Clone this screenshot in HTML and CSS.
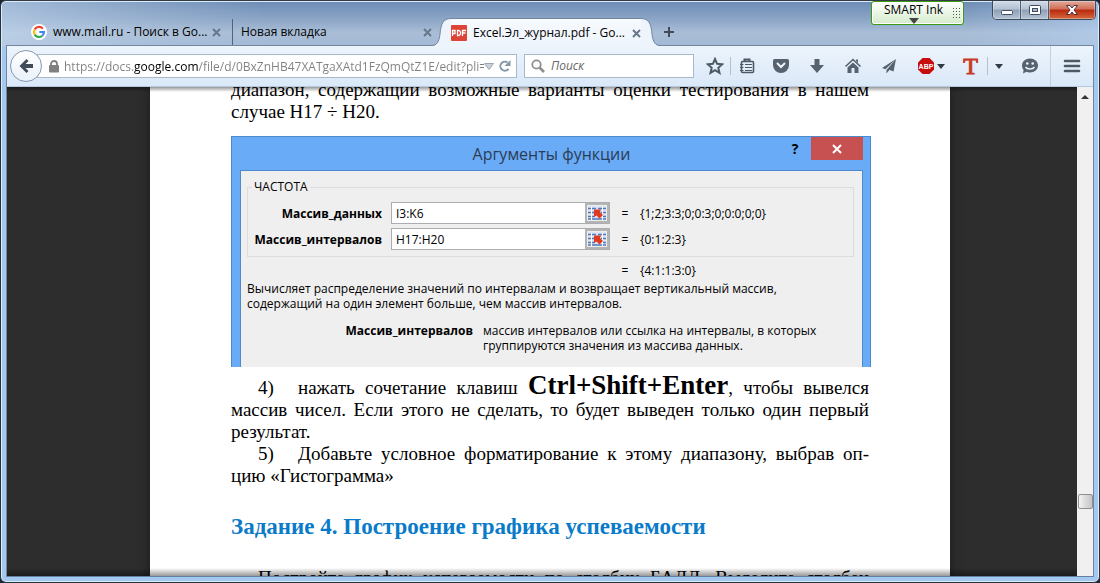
FILE: index.html
```html
<!DOCTYPE html>
<html lang="ru">
<head>
<meta charset="utf-8">
<title>Excel.Эл_журнал.pdf</title>
<link rel="stylesheet" href="styles.css">
</head>
<body>
<div class="window">
  <header class="tabs">
    <div class="tab">
      <svg class="favicon" viewBox="0 0 16 16"><circle cx="8" cy="8" r="8" fill="#fff"/><g fill="none" stroke-width="2.2"><path d="M11.9 4.6A5 5 0 0 0 3.7 5.5" stroke="#ea4335"/><path d="M3.7 5.5A5 5 0 0 0 3.7 10.6" stroke="#fbbc05"/><path d="M3.7 10.6A5 5 0 0 0 11.3 11.7" stroke="#34a853"/><path d="M11.3 11.7A5 5 0 0 0 13 8H8.3" stroke="#4285f4"/></g></svg>
      <span class="title">www.mail.ru - Поиск в Go...</span>
      <button class="close" aria-label="Закрыть вкладку"><svg viewBox="0 0 9 9"><path d="M1 1l7 7M8 1L1 8"/></svg></button>
    </div>
    <div class="tab second">
      <span class="title">Новая вкладка</span>
      <button class="close" aria-label="Закрыть вкладку"><svg viewBox="0 0 9 9"><path d="M1 1l7 7M8 1L1 8"/></svg></button>
    </div>
    <div class="active-tab">
      <svg class="edge" viewBox="0 0 20 29"><path class="fill" d="M0 29V28C6 28 8 24 9 16C10 6 12 .5 20 .5V29Z"/><path class="line" d="M0 27.5C6 27.5 8 24 9 16C10 6 12 .5 20 .5"/></svg>
      <div class="tab-body">
        <svg class="favicon" viewBox="0 0 16 16"><rect width="16" height="16" rx="1" fill="#db4437"/><path d="M1.500 11V5.500H4V8.500H2M6.500 5.500V10.500H8L9.500 9V7L8 5.500ZM11.500 11V5.500H15M11.500 8H14.500" fill="none" stroke="#fff" stroke-width="1.300"/></svg>
        <span class="title">Excel.Эл_журнал.pdf - Go...</span>
        <button class="close" aria-label="Закрыть вкладку"><svg viewBox="0 0 9 9"><path d="M1 1l7 7M8 1L1 8"/></svg></button>
      </div>
      <svg class="edge" viewBox="0 0 20 29"><path class="fill" d="M20 29V28C14 28 12 24 11 16C10 6 8 .5 0 .5V29Z"/><path class="line" d="M20 27.5C14 27.5 12 24 11 16C10 6 8 .5 0 .5"/></svg>
    </div>
    <button class="new-tab" aria-label="Новая вкладка"><svg viewBox="0 0 10 10"><path d="M5 0V10M0 5H10" stroke="#414b57" stroke-width="2"/></svg></button>
  </header>

  <button class="smart-ink"><span>SMART Ink</span><svg class="ink-arrow" viewBox="0 0 10 6"><path d="M0 0H10L5 6Z" fill="#444"/></svg><i class="grip"></i></button>
  <div class="controls">
    <button aria-label="Свернуть"><svg viewBox="0 0 14 12"><rect x="1.5" y="6.500" width="11" height="4" rx="1" fill="#fff" stroke="#414b61"/></svg></button>
    <button aria-label="Развернуть"><svg viewBox="0 0 14 12"><rect x="1.500" y="1.500" width="11" height="9" rx="1" fill="#fff" stroke="#414b61"/><rect x="4.500" y="4.500" width="5" height="3" fill="#a9b8cb" stroke="#414b61"/></svg></button>
    <button class="quit" aria-label="Закрыть"><svg viewBox="0 0 14 12"><path d="M1.500 1.500H5L7 4 9 1.500H12.500L9 6 12.500 10.500H9L7 8 5 10.500H1.500L5 6Z" fill="#fff" stroke="#542c36"/></svg></button>
  </div>

  <main class="client">
    <nav class="toolbar">
      <button class="back" aria-label="Назад"><svg viewBox="0 0 16 16"><path d="M8.500 1L1.500 8l7 7 2-2-3-3H15V6H7.500l3-3z" fill="#414b57"/></svg></button>
      <div class="urlbar">
        <svg class="lock" viewBox="0 0 10 13"><rect y="5" width="10" height="7.500" rx="1" fill="#808080"/><path d="M2 6V4a3 3 0 0 1 6 0V6" fill="none" stroke="#808080" stroke-width="1.800"/></svg>
        <input class="url" aria-label="Адрес" value="https://docs.google.com/file/d/0BxZnHB47XATgaXAtd1FzQmQtZ1E/edit?pli=">
        <button class="mini" aria-label="История"><svg viewBox="0 0 10 7"><path d="M.5 .5H9.500L5 6.500Z" fill="#ccd2da" stroke="#9ba7b4"/></svg></button>
        <button class="mini again" aria-label="Обновить"><svg class="reload" viewBox="0 0 12 12"><path d="M9.500 8.800A4.500 4.500 0 1 1 8.500 2.500" fill="none" stroke="#8497a7" stroke-width="2"/><path d="M11.500 0V6H5.500Z" fill="#8497a7"/></svg></button>
      </div>
      <div class="search">
        <svg class="lens" viewBox="0 0 14 14"><circle cx="5.500" cy="5.500" r="4.200" fill="none" stroke="#8f8f8f" stroke-width="1.800"/><path d="M8.500 8.500L13 13" stroke="#8f8f8f" stroke-width="2.600"/></svg>
        <input aria-label="Поиск" placeholder="Поиск">
      </div>
      <div class="tools">
        <button class="star" aria-label="В закладки"><svg viewBox="0 0 18 18"><path d="M9 2l2.100 4.800 5.100.5-3.900 3.500 1.200 5.100L9 13.200 4.500 15.900l1.200-5.100L1.800 7.300l5.100-.5z" fill="none" stroke="#4c5967" stroke-width="2"/></svg></button>
        <button class="divided" aria-label="Закладки"><svg viewBox="0 0 18 18"><path d="M6.500 4V2.500H11.500V4" fill="none" stroke="#4c5967" stroke-width="2"/><rect x="3.500" y="4.500" width="12" height="11" rx="1" fill="none" stroke="#4c5967" stroke-width="1.600"/><path d="M7 7.500H14M7 10.500H14M7 13.500H14M2 7.500H5.500M2 10.500H5.500M2 13.500H5.500" stroke="#4c5967"/></svg></button>
        <button aria-label="Pocket"><svg viewBox="0 0 18 18"><path d="M2.500 2H15.500Q17 2 17 3.500V8A8 8 0 0 1 1 8V3.500Q1 2 2.500 2Z" fill="#56626f"/><path d="M5.500 6.500L9 10l3.500-3.500" fill="none" stroke="#eef4fb" stroke-width="2" stroke-linecap="round"/></svg></button>
        <button aria-label="Загрузки"><svg viewBox="0 0 18 18"><path d="M6.500 2H11.500V8H16L9 16 2 8H6.500Z" fill="#56626f"/></svg></button>
        <button aria-label="Домой"><svg viewBox="0 0 18 18"><path d="M1.500 9.500L9 2.500l7.500 7" fill="none" stroke="#56626f" stroke-width="1.600"/><path d="M3.500 10.500L9 5.500l5.500 5V16H10.500V11H7.500V16H3.500ZM12 2.500H14V6L12 4Z" fill="#56626f"/></svg></button>
        <button aria-label="Отправить"><svg viewBox="0 0 18 18"><path d="M16 2L2 11l3.500 1.200zM16 2L6.500 13v3.500L9 13.500zM16 2L8.500 12.500l5 2z" fill="#56626f"/></svg></button>
        <button class="abp" aria-label="Adblock Plus"><svg viewBox="0 0 18 18"><path d="M5.500 1H12.500L17 5.500V12.500L12.500 17H5.500L1 12.500V5.500Z" fill="#c70d0d"/><text x="9" y="12" text-anchor="middle" class="abp-text">ABP</text></svg><svg class="caret" viewBox="0 0 8 5"><path d="M0 0H8L4 5Z" fill="#303a45"/></svg></button>
        <button class="translate" aria-label="Перевод">T</button>
        <button class="more divided" aria-label="Меню перевода"><svg class="caret" viewBox="0 0 8 5"><path d="M0 0H8L4 5Z" fill="#303a45"/></svg></button>
        <button class="chat" aria-label="Hello"><svg viewBox="0 0 18 18"><path d="M9 1.500C13.500 1.500 17 4.500 17 8.500S13.500 15.500 9 15.500C7.500 15.500 6.500 15.200 5.500 14.800L2 16.500 2.600 13C1.500 11.800 1 10.300 1 8.500 1 4.500 4.500 1.500 9 1.500Z" fill="#56626f"/><circle cx="6.300" cy="6.500" r="1.300" fill="#edf4fc"/><circle cx="11.700" cy="6.500" r="1.300" fill="#edf4fc"/><path d="M4.500 10A5 3.500 0 0 0 13.500 10" fill="none" stroke="#edf4fc" stroke-width="1.500"/></svg></button>
        <button class="menu" aria-label="Меню"><svg viewBox="0 0 18 18"><path d="M2 4H16M2 9H16M2 14H16" stroke="#4c5967" stroke-width="2.600" stroke-linecap="round"/></svg></button>
      </div>
    </nav>

    <div class="viewer">
      <article class="page">
        <p class="lead">диапазон, содержащий возможные варианты оценки тестирования в нашем случае H17 ÷ H20.</p>
        <section class="dialog">
          <header class="dialog-head"><h1>Аргументы функции</h1><button class="help" aria-label="Справка">?</button><button class="dismiss" aria-label="Закрыть окно"><svg viewBox="0 0 10 10"><path d="M1 1l8 8M9 1L1 9" stroke="#fff" stroke-width="2"/></svg></button></header>
          <div class="dialog-body">
            <fieldset>
              <legend>ЧАСТОТА</legend>
              <label for="data">Массив_данных</label>
              <div class="range"><input id="data" value="I3:K6"><button aria-label="Выбрать данные"><svg viewBox="0 0 18 14"><rect width="18" height="14" fill="#dbe5f4"/><path d="M0 2.500H8M10 2.500H18M0 6.500H6M13 6.500H18M0 10.500H7M14 10.500H18M0 13H18" stroke="#5279b8" stroke-width="1.500"/><path d="M3.500 1V14M14.500 1V14" stroke="#fff"/><path d="M6 3.500L13 3.500 12 6 15 9 11.500 12.500 8.500 9.500 6 11Z" fill="#df3b20"/></svg></button></div>
              <span>=</span><output>{1;2;3:3;0;0:3;0;0:0;0;0}</output>
              <label for="bins">Массив_интервалов</label>
              <div class="range"><input id="bins" value="H17:H20"><button aria-label="Выбрать интервалы"><svg viewBox="0 0 18 14"><rect width="18" height="14" fill="#dbe5f4"/><path d="M0 2.500H8M10 2.500H18M0 6.500H6M13 6.500H18M0 10.500H7M14 10.500H18M0 13H18" stroke="#5279b8" stroke-width="1.500"/><path d="M3.500 1V14M14.500 1V14" stroke="#fff"/><path d="M6 3.500L13 3.500 12 6 15 9 11.500 12.500 8.500 9.500 6 11Z" fill="#df3b20"/></svg></button></div>
              <span>=</span><output>{0:1:2:3}</output>
            </fieldset>
            <div class="total"><span>=</span><output>{4:1:1:3:0}</output></div>
            <p class="about">Вычисляет распределение значений по интервалам и возвращает вертикальный массив,<br>содержащий на один элемент больше, чем массив интервалов.</p>
            <dl><dt>Массив_интервалов</dt><dd>массив интервалов или ссылка на интервалы, в которых<br>группируются значения из массива данных.</dd></dl>
          </div>
        </section>
        <p class="step"><span class="num">4)</span>нажать сочетание клавиш <strong>Ctrl+Shift+Enter</strong>, чтобы вывелся массив чисел. Если этого не сделать, то будет выведен только один первый результат.</p>
        <p class="step"><span class="full"><span class="num">5)</span>Добавьте условное форматирование к этому диапазону, выбрав оп-</span>цию «Гистограмма»</p>
        <h2>Задание 4. Построение графика успеваемости</h2>
        <p class="step"><span class="full">Постройте график успеваемости по столбцу БАЛЛ. Выделите столбец</span></p>
      </article>
      <div class="scrollbar">
        <svg class="up" viewBox="0 0 8 4"><path d="M0 4L4 0 8 4Z"/></svg>
        <i class="thumb"></i>
        <svg class="down" viewBox="0 0 8 4"><path d="M0 0L4 4 8 0Z"/></svg>
      </div>
    </div>
  </main>
</div>
</body>
</html>
```

FILE: styles.css
```css
* { box-sizing: border-box; }
body { margin: 0; background: #1c2530; }
button, input { font: inherit; color: inherit; margin: 0; padding: 0; border: 0; background: none; outline: 0; }
button { display: flex; align-items: center; justify-content: center; }
svg { display: block; flex: none; }

.window {
  position: relative;
  display: flex;
  flex-direction: column;
  height: 100vh;
  padding: 1px 5px 5px;
  border: 1px solid #27323f;
  border-top-color: #343b45;
  border-radius: 6px;
  box-shadow: inset 0 0 0 1px #dcebf9;
  background:
    linear-gradient(to right, #c5d9ef99, #b9cde455 12%, transparent 24%, transparent 88%, #b8d4f388) top / 100% 45px no-repeat,
    linear-gradient(#6c8cb5, #8ba5c6 40%, #a9bdd6 70%, #a3b9d5) top / 100% 45px no-repeat,
    #a5c9ee;
  font: 12px/16px "Open Sans", "Noto Sans", sans-serif;
  color: #000;
}

.tabs { display: flex; align-items: flex-end; height: 43px; flex: none; padding-left: 25px; }
.tab { display: flex; align-items: center; width: 202px; height: 26px; padding-right: 11px; border-right: 1px solid #526479; }
.tab.second { padding: 0 3px 0 8px; border: 0; }
.favicon { width: 16px; height: 16px; margin-right: 6px; }
.title { flex: 1; white-space: nowrap; overflow: hidden; }
.close { width: 9px; height: 9px; }
.close svg { width: 9px; height: 9px; fill: none; stroke: #687789; stroke-width: 2; }
.active-tab { display: flex; width: 230px; height: 29px; margin: 0 -2px -2px -4px; z-index: 1; }
.edge { width: 20px; height: 29px; }
.edge .fill { fill: #edf4fc; }
.edge .line { fill: none; stroke: #72869f; }
.tab-body { display: flex; flex: 1; align-items: center; border-top: 1px solid #72869f; background: linear-gradient(#f7fafe, #edf4fc); }
.new-tab { width: 20px; height: 26px; }
.new-tab svg { width: 10px; height: 10px; }

.smart-ink { position: absolute; top: 0; right: 135px; display: grid; grid-template-columns: 76px 8px; width: 93px; height: 24px; border: 1px solid #3b9a13; border-radius: 3px; background: linear-gradient(#fff, #d4ebca); line-height: 14px; box-shadow: inset 0 0 0 1px #fff; }
.smart-ink span { grid-area: 1 / 1; }
.ink-arrow { grid-area: 2 / 1; width: 10px; height: 6px; justify-self: center; }
.grip { grid-area: 1 / 2 / 3 / 3; width: 8px; height: 12px; background: radial-gradient(circle, #555 1px, transparent 1px) 0 0 / 3px 3px; }
.controls { position: absolute; top: 0; right: 3px; display: flex; height: 19px; border: 1px solid #3b4b5f; border-top: 0; border-radius: 0 0 5px 5px; overflow: hidden; }
.controls button { width: 28px; background: linear-gradient(#d2dce8, #b2c0d1 45%, #8fa0b6 50%, #b5c4d4); border-right: 1px solid #4d5d71; box-shadow: inset 0 0 0 1px #e5ecf366; }
.controls .quit { width: 46px; border: 0; background: linear-gradient(#e2aa9b, #cf6e57 45%, #b8280e 50%, #d9683c); }
.controls svg { width: 14px; height: 12px; }

.client { display: flex; flex-direction: column; flex: 1; min-height: 0; border: 1px solid #72869f; border-bottom-color: #6280a6; background: #2d2d2d; }
.toolbar { display: flex; align-items: center; flex: none; height: 41px; background: linear-gradient(#edf4fc, #dae8f8); border-bottom: 1px solid #b4c9df; }
.back { width: 32px; height: 32px; margin-left: 3px; border: 1px solid #8797ac; border-radius: 50%; background: linear-gradient(#fff, #eaf1fa); z-index: 1; }
.back svg { width: 16px; height: 16px; }
.urlbar, .search { display: flex; align-items: center; height: 24px; border: 1px solid #a9b9cb; background: #fff; }
.urlbar { flex: 1; margin: 0 7px 0 -5px; padding: 0 5px 0 11px; }
.lock { width: 10px; height: 13px; margin-right: 5px; }
.url { flex: 1; min-width: 0; height: 22px; color: transparent; background: linear-gradient(to right, #808080 70px, #000 70px, #000 134px, #808080 134px); -webkit-background-clip: text; background-clip: text; }
.mini { height: 20px; }
.mini.again { margin-left: 5px; }
.mini svg { width: 10px; height: 7px; }
.mini .reload { width: 12px; height: 12px; }
.search { width: 170px; padding-left: 6px; }
.search input { flex: 1; min-width: 0; }
.search input::placeholder { color: #666; font-style: italic; opacity: 1; }
.lens { width: 14px; height: 14px; margin-right: 6px; }
.tools { display: flex; flex: none; height: 100%; padding-left: 6px; }
.tools button { position: relative; width: 36px; }
.tools svg { width: 18px; height: 18px; }
.tools .caret { width: 8px; height: 5px; }
.tools .star { width: 30px; }
.tools .divided { width: 33px; }
.tools .divided::before { content: ""; position: absolute; left: 0; top: 11px; bottom: 11px; width: 1px; background: #b3c0ce; }
.tools .abp { width: 47px; gap: 2px; }
.abp-text { font: bold 7px "Liberation Sans", sans-serif; fill: #fff; }
.tools .translate { width: 33px; font: 24px "Liberation Serif", serif; color: #c83a28; -webkit-text-stroke: 1px #c83a28; }
.tools .more { width: 23px; }
.tools .chat { width: 40px; }
.tools .menu { width: 43px; border-left: 1px solid #c3d0df; }

.viewer { position: relative; display: grid; grid-template-columns: 1fr 800px 1fr; flex: 1; min-height: 0; overflow: hidden; }
.viewer::after { content: ""; position: absolute; inset: 0 16px 0 0; pointer-events: none; background: linear-gradient(#0006, transparent) top / 100% 5px no-repeat, linear-gradient(transparent, #0006) bottom / 100% 8px no-repeat; }
.page { grid-column: 2; padding: 0 81px; background: #fff; box-shadow: 0 0 12px #0006; font: 19px/22px "Liberation Serif", "Times New Roman", serif; }
.page p { margin: 0; text-align: justify; }
.page .lead { margin-top: -8px; }
.step { text-indent: 27px; }
.full { display: block; white-space: nowrap; text-align-last: justify; }
.full + * { text-indent: 0; }
.page .step:has(.full) { text-indent: 0; }
.page .step .full { text-indent: 27px; }
.num { display: inline-block; width: 40px; text-indent: 0; text-align: left; text-align-last: left; }
.page .step .num { text-indent: 0; }
.step strong { font-size: 27px; line-height: 22px; }
.page h2 { margin: 28px 0; font-size: 23px; line-height: 24px; color: #0a7bc9; }

.dialog { width: 640px; margin: 13px 0 7px; padding: 0 7px 0 8px; border: 1px solid #4d8acb; border-bottom: 0; background: #6aabf7; font: 12px/15px "Open Sans", "Noto Sans", sans-serif; }
.dialog-head { display: grid; grid-template-columns: 1fr 32px 52px; height: 33px; align-items: start; }
.dialog h1 { grid-area: 1 / 1 / 2 / 4; margin: 0; padding-top: 6px; font-size: 16px; line-height: 22px; font-weight: normal; text-align: center; color: #2b3d54; }
.help { grid-area: 1 / 2; height: 22px; font-size: 14px; font-weight: bold; }
.dismiss { grid-area: 1 / 3; height: 23px; background: #c75050; }
.dismiss svg { width: 10px; height: 10px; }
.dialog-body { height: 197px; padding: 8px 8px 0 6px; border: 1px solid #4d8acb; border-bottom: 0; background: #efefef; }
fieldset { display: grid; grid-template-columns: 134px 228px 30px 1fr; row-gap: 4px; align-items: center; margin: 0; padding: 7px 0 6px; border: 1px solid #dcdcdc; }
legend { margin-left: 4px; padding: 0 2px; line-height: 16px; }
fieldset label { font-weight: bold; text-align: right; }
.range { display: flex; height: 22px; margin-left: 9px; border: 1px solid #abadb3; background: #fff; }
.range input { flex: 1; min-width: 0; padding-left: 4px; }
.range button { width: 24px; border: 2px solid #b4b4b4; background: #eee; }
.range svg { width: 18px; height: 14px; }
fieldset span, .total span { text-align: center; }
.total { display: grid; grid-template-columns: 363px 30px 1fr; padding-top: 6px; }
.total span { grid-column: 2; }
.dialog p { text-align: left; }
.page .about { margin-top: 3px; white-space: nowrap; }
dl { display: grid; grid-template-columns: 226px 1fr; column-gap: 10px; margin: 12px 0 0; white-space: nowrap; }
dt { font-weight: bold; text-align: right; }
dd { margin: 0; }

.scrollbar { grid-column: 3; justify-self: end; display: flex; flex-direction: column; align-items: center; width: 16px; padding: 8px 0; background: #f0f0f0; }
.scrollbar svg { width: 8px; height: 4px; fill: #333; }
.up { margin-bottom: 395px; }
.thumb { width: 15px; height: 15px; border: 1px solid #8f8f8f; border-radius: 2px; background: linear-gradient(to right, #f5f5f5, #dadada 50%, #c5c5c9); }
.down { margin-top: auto; }
```
